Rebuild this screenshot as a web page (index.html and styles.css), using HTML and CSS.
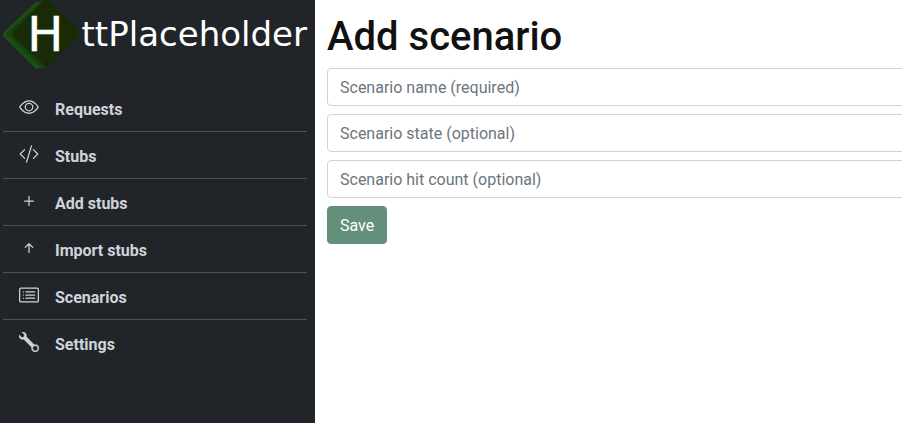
FILE: index.html
```html
<!DOCTYPE html>
<html lang="en">
<head>
<meta charset="utf-8">
<title>HttPlaceholder</title>
<link rel="stylesheet" href="styles.css">
</head>
<body>
<div class="app">
  <aside class="sidebar">
    <svg class="logo" viewBox="0 0 304 70" role="img" aria-label="HttPlaceholder">
      <path fill="#1b5015" d="M33 2 39 1 68 29v8L39 68l-6 1L0 36v-3z"/>
      <path fill="#194411" d="M37 2 43 1 72 30v8L42 67l-4 1L4 36v-4z"/>
      <path fill="#183b0b" d="M40 1 46 0 75 31v5L46 66l-5 1L8 36v-5z"/>
      <path fill="#192b06" d="M41 0h5L76 31v4L46 66h-4L10 36v-4z"/>
      <text class="logo-initial" x="24.3" y="51">H</text>
      <text class="logo-name" x="78.5" y="46" textLength="225.5" lengthAdjust="spacingAndGlyphs">ttPlaceholder</text>
    </svg>
    <nav class="menu">
      <a class="item"><svg class="icon" viewBox="0 0 16 16"><path d="M16 8s-3-5.5-8-5.5S0 8 0 8s3 5.5 8 5.5S16 8 16 8zM1.173 8a13.133 13.133 0 0 1 1.66-2.043C4.12 4.668 5.88 3.5 8 3.5c2.12 0 3.879 1.168 5.168 2.457A13.133 13.133 0 0 1 14.828 8c-.058.087-.122.183-.195.288-.335.48-.83 1.12-1.465 1.755C11.879 11.332 10.119 12.5 8 12.5c-2.12 0-3.879-1.168-5.168-2.457A13.134 13.134 0 0 1 1.172 8z"/><path d="M8 5.5a2.5 2.5 0 1 0 0 5 2.5 2.5 0 0 0 0-5zM4.500 8a3.500 3.500 0 1 1 7 0 3.500 3.500 0 0 1-7 0z"/></svg><span>Requests</span></a>
      <a class="item"><svg class="icon" viewBox="0 0 16 16"><path d="M10.478 1.647a.5.5 0 1 0-.956-.294l-4 13a.5.5 0 0 0 .956.294l4-13zM4.854 4.146a.5.5 0 0 1 0 .708L1.707 8l3.147 3.146a.5.5 0 0 1-.708.708l-3.500-3.500a.5.5 0 0 1 0-.708l3.500-3.500a.5.5 0 0 1 .708 0zm6.292 0a.5.5 0 0 0 0 .708L14.293 8l-3.147 3.146a.5.5 0 0 0 .708.708l3.500-3.500a.5.5 0 0 0 0-.708l-3.500-3.500a.5.5 0 0 0-.708 0z"/></svg><span>Stubs</span></a>
      <a class="item"><svg class="icon" viewBox="0 0 16 16"><path d="M8 4a.5.5 0 0 1 .5.5v3h3a.5.5 0 0 1 0 1h-3v3a.5.5 0 0 1-1 0v-3h-3a.5.5 0 0 1 0-1h3v-3A.5.5 0 0 1 8 4z"/></svg><span>Add stubs</span></a>
      <a class="item"><svg class="icon" viewBox="0 0 16 16"><path d="M8 12a.5.5 0 0 0 .5-.5V5.707l2.146 2.147a.5.5 0 0 0 .708-.708l-3-3a.5.5 0 0 0-.708 0l-3 3a.5.5 0 1 0 .708.708L7.500 5.707V11.500a.5.5 0 0 0 .5.5z"/></svg><span>Import stubs</span></a>
      <a class="item"><svg class="icon" viewBox="0 0 16 16"><path d="M14.500 3a.5.5 0 0 1 .5.5v9a.5.5 0 0 1-.5.5h-13a.5.5 0 0 1-.5-.5v-9a.5.5 0 0 1 .5-.5h13zm-13-1A1.500 1.500 0 0 0 0 3.500v9A1.500 1.500 0 0 0 1.500 14h13a1.500 1.500 0 0 0 1.500-1.500v-9A1.500 1.500 0 0 0 14.500 2h-13z"/><path d="M5 8a.5.5 0 0 1 .5-.5h7a.5.5 0 0 1 0 1h-7A.5.5 0 0 1 5 8zm0-2.500a.5.5 0 0 1 .5-.5h7a.5.5 0 0 1 0 1h-7a.5.5 0 0 1-.5-.5zm0 5a.5.5 0 0 1 .5-.5h7a.5.5 0 0 1 0 1h-7a.5.5 0 0 1-.5-.5zm-1-5a.5.5 0 1 1-1 0 .5.5 0 0 1 1 0zM4 8a.5.5 0 1 1-1 0 .5.5 0 0 1 1 0zm0 2.500a.5.5 0 1 1-1 0 .5.5 0 0 1 1 0z"/></svg><span>Scenarios</span></a>
      <a class="item"><svg class="icon wrench" viewBox="0 0 16 16"><path fill-rule="evenodd" d="M.102 2.223A3.004 3.004 0 0 0 3.780 5.897l6.341 6.252A3.003 3.003 0 0 0 13 16a3 3 0 1 0-.851-5.878L5.897 3.781A3.004 3.004 0 0 0 2.223.1l2.141 2.142L4 4l-1.757.364zM13 11a2 2 0 1 0 0 4 2 2 0 0 0 0-4z"/></svg><span>Settings</span></a>
    </nav>
  </aside>
  <main class="content">
    <h1>Add scenario</h1>
    <input type="text" placeholder="Scenario name (required)">
    <input type="text" placeholder="Scenario state (optional)">
    <input type="text" placeholder="Scenario hit count (optional)">
    <button type="button">Save</button>
  </main>
</div>
</body>
</html>
```
FILE: styles.css
```css
* { box-sizing: border-box; }
body {
  margin: 0;
  font: 16px/24px Roboto, sans-serif;
  color: #111;
  background: #fff;
}
.app { display: flex; height: 100vh; overflow: hidden; }
.sidebar {
  flex: 0 0 315px;
  padding: 0 8px 0 3px;
  background: #212529;
}
.logo { display: block; width: 304px; height: 70px; overflow: visible; }
.logo text { font-family: "DejaVu Sans", sans-serif; fill: #fff; }
.logo .logo-initial { font-size: 48px; stroke: #fff; stroke-width: .4px; }
.logo-name { font-size: 34px; }
.menu { padding-top: 15px; }
.item {
  display: flex;
  height: 47px;
  padding: 12px 16px 0;
  gap: 16px;
  border-bottom: 1px solid #4d5154;
  color: #ced4da;
  font-weight: 700;
}
.item span { padding-top: 1px; }
.item:last-child { border-bottom: 0; }
.icon { width: 20px; height: 20px; fill: currentColor; }
.wrench { stroke: currentColor; stroke-width: .3px; }
.content {
  display: flex;
  flex: 0 0 640px;
  flex-direction: column;
  align-items: flex-start;
  gap: 8px;
  padding: 13px 12px 12px;
}
h1 { margin: 0; font-size: 40px; line-height: 47px; font-weight: 500; }
input, button {
  height: 38px;
  padding: 6px 12px;
  border: 1px solid #ced4da;
  border-radius: 4px;
  font: inherit;
}
input { width: 100%; background: #fff; }
input::placeholder { color: #6c757d; opacity: 1; }
button { padding: 7px 12px 5px; border-color: #648f7a; background: #648f7a; color: #fff; }
```
